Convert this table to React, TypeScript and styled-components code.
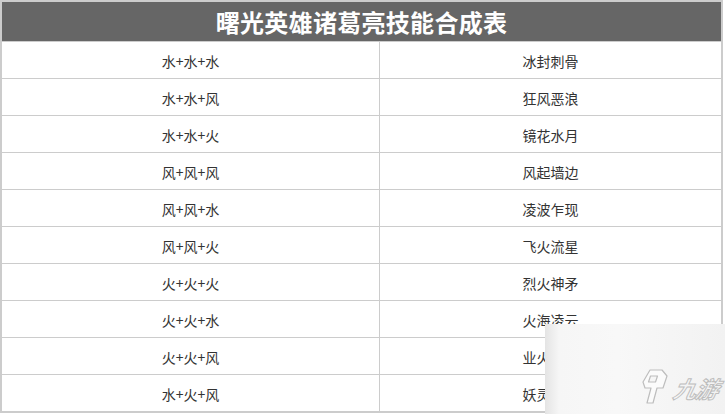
import styled, { createGlobalStyle } from "styled-components";

const Global = createGlobalStyle`
  html, body {
    margin: 0;
    padding: 0;
    background: #fff;
  }
  body {
    font-family: "Noto Sans CJK SC", "Noto Sans", sans-serif;
  }
`;

const Page = styled.div`
  position: relative;
  width: 725px;
  height: 414px;
  overflow: hidden;
`;

const Table = styled.div`
  width: 723px;
  height: 413px;
  box-sizing: border-box;
  border: 2px solid #cccccc;
  display: flex;
  flex-direction: column;
`;

const Title = styled.div`
  height: 39px;
  background: #666666;
  color: #fff;
  font-size: 24px;
  font-weight: 700;
  display: flex;
  align-items: center;
  justify-content: center;
  letter-spacing: 0.3px;
`;

const Row = styled.div`
  display: grid;
  grid-template-columns: 377px 1fr;
  height: 37px;
  box-sizing: border-box;
  border-top: 1px solid #cccccc;
`;

const Cell = styled.div<{ $divider?: boolean }>`
  display: flex;
  align-items: center;
  justify-content: center;
  font-size: 14px;
  color: #333;
  padding-top: 1px;
  border-left: ${(p) => (p.$divider ? "1px solid #cccccc" : "none")};
`;

const Watermark = styled.div`
  position: absolute;
  left: 545px;
  top: 324px;
  width: 180px;
  height: 90px;
  background: linear-gradient(
    to right,
    #e4e4e4 0px,
    #f6f6f6 14px,
    #f8f8f8 40%,
    #f2f2f2 100%
  );
  display: flex;
  align-items: flex-end;
  justify-content: flex-end;
  gap: 6px;
  padding: 0 7px 9px 0;
  box-sizing: border-box;
`;

const Brand = styled.span`
  font-size: 23px;
  font-style: italic;
  font-weight: 700;
  color: transparent;
  -webkit-text-stroke: 1px #bdbdbd;
  letter-spacing: -1px;
  line-height: 1;
  margin-bottom: 5px;
  transform: skewX(-12deg);
`;

const rows: [string, string][] = [
  ["水+水+水", "冰封刺骨"],
  ["水+水+风", "狂风恶浪"],
  ["水+水+火", "镜花水月"],
  ["风+风+风", "风起墙边"],
  ["风+风+水", "凌波乍现"],
  ["风+风+火", "飞火流星"],
  ["火+火+火", "烈火神矛"],
  ["火+火+水", "火海凌云"],
  ["火+火+风", "业火燎原"],
  ["水+火+风", "妖灵之火"],
];

const Logo = () => (
  <svg width="26" height="36" viewBox="0 0 26 36">
    <path
      d="M8 1 L20 1 L25 7 L21 19 L15 19 L11 34 L5 34 L9 19 L3 19 L1 13 Z M8.5 7 L6.5 13 L13.5 13 L15.5 7 Z"
      fill="#fbfbfb"
      stroke="#bdbdbd"
      strokeWidth="1.2"
      strokeLinejoin="round"
      fillRule="evenodd"
    />
  </svg>
);

export default function App() {
  return (
    <Page>
      <Global />
      <Table>
        <Title>曙光英雄诸葛亮技能合成表</Title>
        {rows.map(([combo, skill]) => (
          <Row key={combo + skill}>
            <Cell>{combo}</Cell>
            <Cell $divider>{skill}</Cell>
          </Row>
        ))}
      </Table>
      <Watermark>
        <Logo />
        <Brand>九游</Brand>
      </Watermark>
    </Page>
  );
}
